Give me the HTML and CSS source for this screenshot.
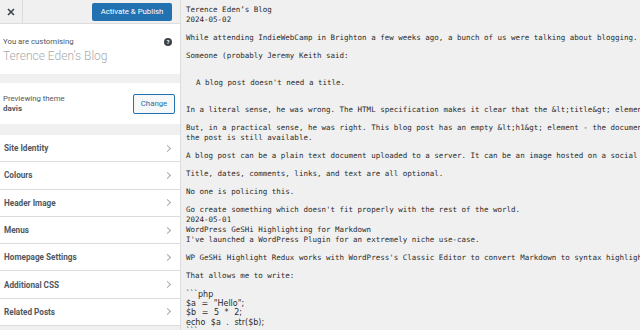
FILE: index.html
```html
<!DOCTYPE html>
<html lang="en">
<head>
    <meta charset="UTF-8">
    <title>Customise: Terence Eden’s Blog</title>
    <link rel="stylesheet" href="styles.css">
</head>
<body>
    <!-- Customizer sidebar -->
    <div class="sidebar">
        <div class="header">
            <div class="close">
                <svg width="8" height="8" viewBox="0 0 8 8"><path d="M1 1 L7 7 M7 1 L1 7" stroke="#3c434a" stroke-width="1.6"/></svg>
            </div>
            <button class="publish">Activate &amp; Publish</button>
        </div>

        <div class="info">
            <div class="info-top">
                <span class="label">You are customising</span>
                <span class="help">?</span>
            </div>
            <div class="site-title">Terence Eden’s Blog</div>
        </div>

        <div class="theme">
            <div>
                <div class="label">Previewing theme</div>
                <div class="theme-name">davis</div>
            </div>
            <button class="change">Change</button>
        </div>

        <ul class="sections">
            <li>Site Identity<span class="chev"></span></li>
            <li>Colours<span class="chev"></span></li>
            <li>Header Image<span class="chev"></span></li>
            <li>Menus<span class="chev"></span></li>
            <li>Homepage Settings<span class="chev"></span></li>
            <li>Additional CSS<span class="chev"></span></li>
            <li>Related Posts<span class="chev"></span></li>
        </ul>
    </div>

    <!-- Preview frame -->
    <div class="preview">
        <p>Terence Eden’s Blog
2024-05-02</p>
        <p>While attending IndieWebCamp in Brighton a few weeks ago, a bunch of us were talking about blogging.</p>
        <p>Someone (probably Jeremy Keith said:</p>
        <blockquote>A blog post doesn't need a title.</blockquote>
        <p>In a literal sense, he was wrong. The HTML specification makes it clear that the &amp;lt;title&amp;gt; element is mandatory.</p>
        <p>But, in a practical sense, he was right. This blog post has an empty &amp;lt;h1&amp;gt; element - the document is still valid and
the post is still available.</p>
        <p>A blog post can be a plain text document uploaded to a server. It can be an image hosted on a social media site.</p>
        <p>Title, dates, comments, links, and text are all optional.</p>
        <p>No one is policing this.</p>
        <p>Go create something which doesn't fit properly with the rest of the world.
2024-05-01
WordPress GeSHi Highlighting for Markdown
I've launched a WordPress Plugin for an extremely niche use-case.</p>
        <p>WP GeSHi Highlight Redux works with WordPress's Classic Editor to convert Markdown to syntax highlighting.</p>
        <p>That allows me to write:</p>
        <p class="code">```php
$a = "Hello";
$b = 5 * 2;
echo $a . str($b);
```</p>
    </div>
</body>
</html>
```

FILE: styles.css
```css
* {
    box-sizing: border-box;
}
body {
    margin: 0;
    display: flex;
    height: 330px;
    overflow: hidden;
    font-family: Roboto, "Liberation Sans", sans-serif;
    background-color: #f0f0f1;
}

/* Sidebar */
.sidebar {
    width: 181px;
    flex-shrink: 0;
    background-color: #f0f0f1;
    border-right: 1px solid #dcdcde;
}
.header {
    height: 24px;
    display: flex;
    align-items: center;
    justify-content: space-between;
    border-bottom: 1px solid #dcdcde;
    padding-right: 8px;
}
.close {
    width: 23px;
    height: 23px;
    display: flex;
    align-items: center;
    justify-content: center;
    border-right: 1px solid #dcdcde;
}
.publish {
    height: 18px;
    width: 80px;
    padding: 0;
    border: none;
    border-radius: 2px;
    background-color: #2271b1;
    color: #fff;
    font-family: Roboto, sans-serif;
    font-size: 7.8px;
}

.info {
    background-color: #fff;
    height: 50px;
    padding: 13px 8px 0 3px;
}
.info-top {
    display: flex;
    justify-content: space-between;
    align-items: center;
}
.label {
    font-size: 7.8px;
    color: #50575e;
}
.help {
    width: 8px;
    height: 8px;
    border-radius: 50%;
    background-color: #3c434a;
    color: #fff;
    font-size: 6px;
    font-weight: bold;
    display: flex;
    align-items: center;
    justify-content: center;
}
.site-title {
    font-size: 12px;
    font-weight: 300;
    color: #a7aaad;
    margin-top: 3px;
}

.theme {
    background-color: #fff;
    margin-top: 9px;
    height: 41px;
    padding: 0 5px 0 3px;
    display: flex;
    justify-content: space-between;
    align-items: center;
}
.theme-name {
    font-size: 8px;
    font-weight: bold;
    color: #50575e;
    margin-top: 1px;
}
.change {
    width: 42px;
    height: 20px;
    padding: 0;
    border: 1px solid #2271b1;
    border-radius: 2px;
    background-color: #f6f7f7;
    color: #2271b1;
    font-family: Roboto, sans-serif;
    font-size: 7.8px;
}

.sections {
    list-style: none;
    margin: 11px 0 0;
    padding: 0;
}
.sections li {
    height: 27.3px;
    display: flex;
    align-items: center;
    justify-content: space-between;
    padding: 0 10px 0 4px;
    background-color: #fff;
    border-bottom: 1px solid #dcdcde;
    font-size: 8.2px;
    font-weight: bold;
    color: #50575e;
}
.chev {
    width: 5px;
    height: 5px;
    border-top: 1px solid #a7aaad;
    border-right: 1px solid #a7aaad;
    transform: rotate(45deg);
}

/* Preview */
.preview {
    flex: 1;
    overflow: hidden;
    background-color: #f0f0f0;
    padding: 5px 0 0 5px;
    font-family: "DejaVu Sans Mono", monospace;
    font-size: 7.5px;
    line-height: 10px;
    color: #2a2a2a;
}
.preview p,
.preview blockquote {
    white-space: pre;
}
.preview p {
    margin: 8px 0;
}
.preview p:first-child {
    margin-top: 0;
}
.preview blockquote {
    margin: 0;
    padding: 9px 0 9px 10px;
}
.preview .code {
    font-family: "DejaVu Sans", sans-serif;
    font-size: 8px;
    word-spacing: 3px;
    line-height: 9.2px;
    margin-top: 9px;
}
```
